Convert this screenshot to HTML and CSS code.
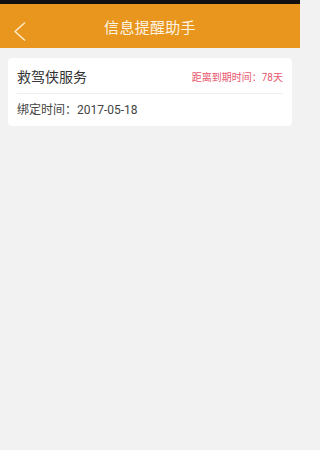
FILE: index.html
```html
<!DOCTYPE html>
<html lang="zh">
<head>
<meta charset="utf-8">
<link rel="stylesheet" href="styles.css">
</head>
<body>
<div class="app">
  <div class="statusbar"></div>
  <header class="header">
    <svg class="back" width="14" height="22" viewBox="0 0 14 22"><path d="M11.5 2 L2 10.5 L11.5 19" fill="none" stroke="#fbe9c8" stroke-width="1.6" stroke-linecap="round" stroke-linejoin="round"/></svg>
    <h1 class="title">信息提醒助手</h1>
  </header>
  <main class="content">
    <section class="card">
      <div class="card-top">
        <span class="service">救驾侠服务</span>
        <span class="expire">距离到期时间：78天</span>
      </div>
      <div class="card-bottom">
        <span class="bind">绑定时间：2017-05-18</span>
      </div>
    </section>
  </main>
</div>
</body>
</html>
```
FILE: styles.css
```css
html, body {
  margin: 0;
  padding: 0;
  background: #f2f2f2;
}
body {
  font-family: Roboto, "Noto Sans CJK SC", sans-serif;
  overflow: hidden;
}
.app {
  width: 300px;
  height: 450px;
  background: #f2f2f2;
}
.statusbar {
  height: 4px;
  background: #111;
}
.header {
  position: relative;
  height: 44px;
  background: #e8961d;
  display: flex;
  align-items: center;
  justify-content: center;
}
.back {
  position: absolute;
  left: 13px;
  top: 17px;
}
.title {
  margin: 0;
  font-size: 15px;
  font-weight: normal;
  color: #fdf3e3;
  letter-spacing: 0.3px;
}
.content {
  padding: 10px 8px;
}
.card {
  background: #fff;
  border-radius: 4px;
  padding: 0 9px;
}
.card-top {
  height: 35px;
  display: flex;
  align-items: center;
  justify-content: space-between;
  border-bottom: 1px solid #efefef;
}
.service {
  font-size: 14px;
  color: #333;
}
.expire {
  font-size: 10px;
  color: #e9566d;
  padding-top: 2px;
}
.card-bottom {
  height: 32px;
  display: flex;
  align-items: center;
}
.bind {
  font-size: 12px;
  color: #444;
  margin-top: -3px;
}
```
